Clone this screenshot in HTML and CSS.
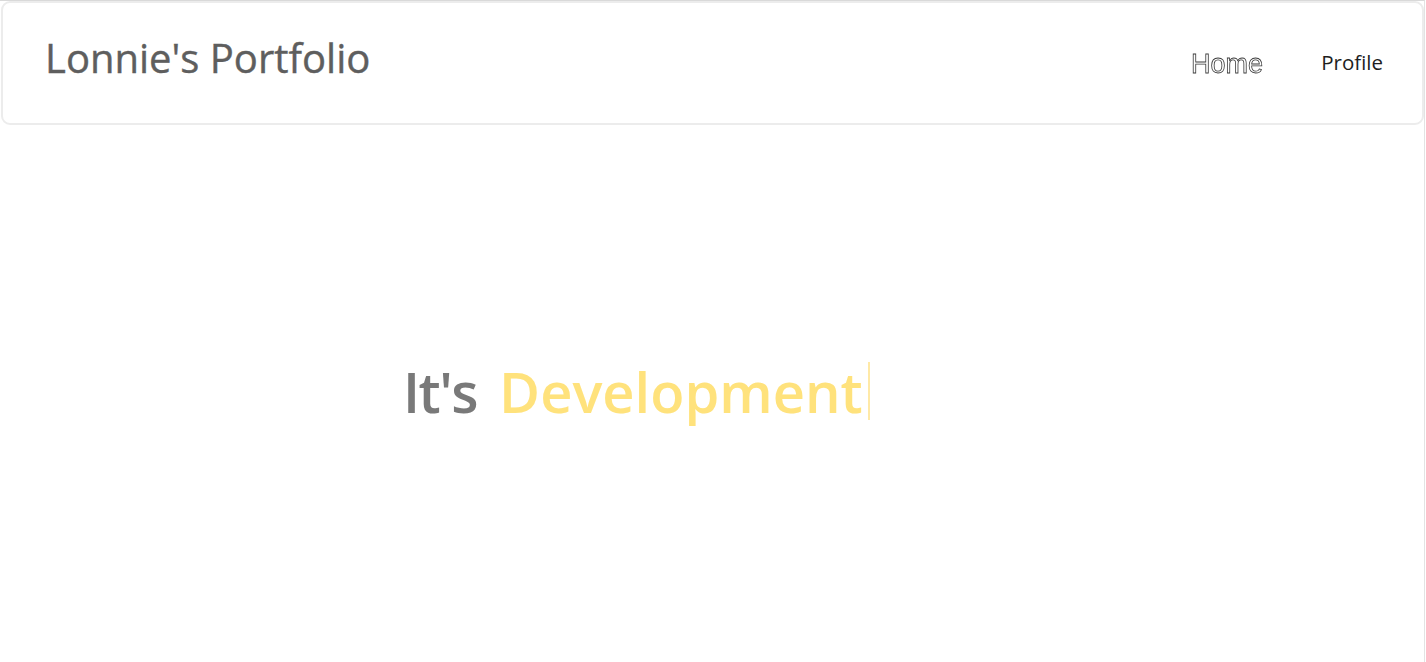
FILE: index.html
```html
<!DOCTYPE html>
<html>
<head>
<meta charset="utf-8">
<link rel="stylesheet" href="styles.css">
</head>
<body>
<div class="page">
  <header class="navbar">
    <div class="brand">Lonnie's Portfolio</div>
    <nav class="links">
      <a class="link link-outline" href="#">Home</a>
      <a class="link" href="#">Profile</a>
    </nav>
  </header>
  <main class="hero">
    <h1 class="headline"><span class="lead">It's</span><span class="word">Development</span><span class="cursor"></span></h1>
  </main>
</div>
</body>
</html>
```
FILE: styles.css
```css
html, body {
  margin: 0;
  padding: 0;
  height: 100%;
  background: #fff;
}
.page {
  box-sizing: border-box;
  width: 1425px;
  height: 662px;
  border-right: 1px solid #e3e3e3;
  border-top: 1px solid #d9d9d9;
  display: flex;
  flex-direction: column;
  font-family: "Open Sans", "Liberation Sans", sans-serif;
}
.navbar {
  box-sizing: border-box;
  height: 124px;
  margin-left: 1px;
  border: 2px solid #ececec;
  border-radius: 9px;
  display: flex;
  align-items: center;
  justify-content: space-between;
  padding: 0 39px 0 42px;
}
.brand {
  font-size: 40px;
  color: #5e5e5e;
  margin-top: -12px;
  -webkit-text-stroke: 0.4px #5e5e5e;
}
.links {
  display: flex;
  align-items: center;
  gap: 58px;
  margin-top: -2px;
}
.link {
  font-family: "Open Sans", sans-serif;
  font-size: 20.5px;
  color: #1e1e1e;
  text-decoration: none;
  font-weight: 500;
}
.link-outline {
  font-family: "Liberation Sans", sans-serif;
  font-size: 27px;
  font-weight: 400;
  color: #fff;
  -webkit-text-stroke: 0.8px #3a3a3a;
  margin-top: 4px;
  will-change: transform;
}
.hero {
  flex: 1;
  display: flex;
  align-items: center;
  padding-left: 403px;
  padding-bottom: 6px;
}
.headline {
  margin: 0;
  display: flex;
  align-items: center;
  font-size: 56px;
  font-weight: 600;
  line-height: 1;
}
.lead {
  color: #797979;
  letter-spacing: -1.5px;
  margin-right: 22px;
}
.word {
  color: #ffe27c;
}
.cursor {
  display: inline-block;
  width: 2px;
  height: 58px;
  margin-left: 5px;
  background: #ffe9a6;
}
```
